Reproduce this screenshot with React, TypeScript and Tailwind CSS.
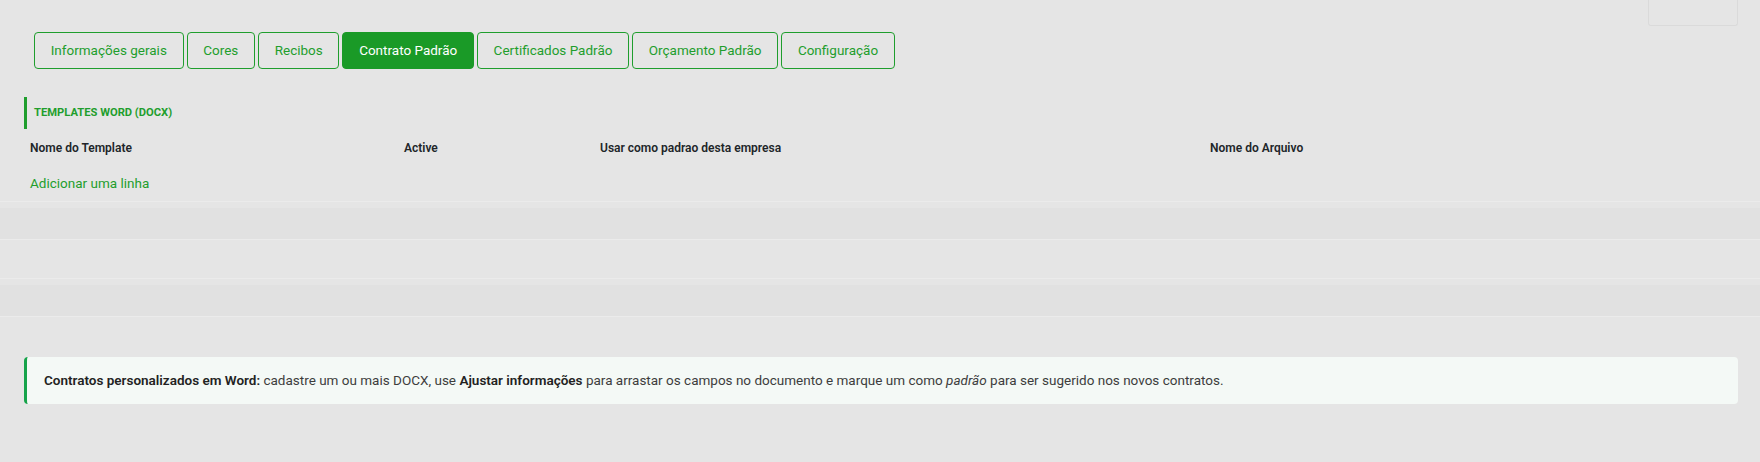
import React from 'react';

const tabs = [
  'Informações gerais',
  'Cores',
  'Recibos',
  'Contrato Padrão',
  'Certificados Padrão',
  'Orçamento Padrão',
  'Configuração',
];

export default function App() {
  const active = 'Contrato Padrão';

  return (
    <div className="min-h-[462px] w-full bg-[#e5e5e5] font-['Roboto',_'Liberation_Sans',_sans-serif] text-[#212529]">
      {/* top-right leftover pager box */}
      <div className="flex justify-end pr-[22px]">
        <div className="h-[26px] w-[90px] rounded-b-[3px] border border-t-0 border-[#dadada]" />
      </div>

      {/* tabs */}
      <div className="mt-[6px] flex gap-[3px] pl-[34px]">
        {tabs.map((tab) => (
          <button
            key={tab}
            className={
              tab === active
                ? 'h-[37px] rounded-[4px] border border-[#1a9a27] bg-[#1a9a27] px-[15.7px] text-[13.5px] text-white'
                : 'h-[37px] rounded-[4px] border border-[#1f9e2d] px-[15.7px] text-[13.5px] text-[#1f9e2d]'
            }
          >
            {tab}
          </button>
        ))}
      </div>

      {/* section title */}
      <div className="ml-[24px] mt-[28px] flex h-[32px] items-center border-l-[3px] border-[#1f9e2d] pl-[7px]">
        <span className="text-[11.2px] font-bold uppercase text-[#1f9e2d]">Templates Word (DOCX)</span>
      </div>

      {/* table header */}
      <div className="grid h-[37px] grid-cols-[374px_196px_610px_1fr] items-center pl-[30px] text-[12px] font-semibold">
        <span>Nome do Template</span>
        <span>Active</span>
        <span>Usar como padrao desta empresa</span>
        <span>Nome do Arquivo</span>
      </div>

      <div className="flex h-[35px] items-center pl-[30px]">
        <a className="cursor-pointer text-[13.5px] text-[#1f9e2d]">Adicionar uma linha</a>
      </div>

      {/* empty striped rows */}
      <div className="border-t border-[#ebebeb]">
        <div className="h-[6px]" />
        <div className="h-[31px] bg-[#e1e1e1]" />
      </div>
      <div className="h-[39px] border-t border-[#ebebeb]" />
      <div className="border-t border-[#ebebeb]">
        <div className="h-[6px]" />
        <div className="h-[31px] bg-[#e1e1e1]" />
      </div>
      <div className="border-t border-[#ebebeb]" />

      {/* help alert */}
      <div className="ml-[24px] mr-[22px] mt-[40px] flex h-[47px] items-center rounded-[4px] border-l-[3px] border-[#16a34a] bg-[#f4f9f6] pl-[17px] text-[13.5px] text-[#3d3d3d]">
        <p>
          <b className="font-semibold text-[#222]">Contratos personalizados em Word:</b> cadastre um ou mais DOCX, use{' '}
          <b className="font-semibold text-[#222]">Ajustar informações</b> para arrastar os campos no documento e marque um
          como <i>padrão</i> para ser sugerido nos novos contratos.
        </p>
      </div>
    </div>
  );
}
